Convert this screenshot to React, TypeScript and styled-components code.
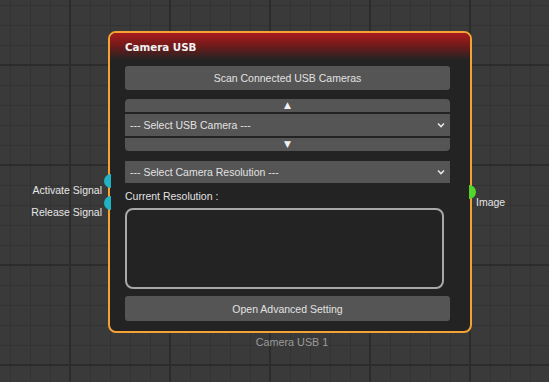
import React from "react";
import styled, { createGlobalStyle } from "styled-components";

const Global = createGlobalStyle`
  html, body { margin: 0; padding: 0; background: #3a3a3a; }
  * { box-sizing: border-box; }
`;

const Canvas = styled.div`
  position: relative;
  width: 549px;
  height: 382px;
  overflow: hidden;
  font-family: "Liberation Sans", Arial, sans-serif;
  background-color: #3a3a3a;
  background-image:
    linear-gradient(to right, #2c2c2c 2px, transparent 2px),
    linear-gradient(to bottom, #2c2c2c 2px, transparent 2px),
    linear-gradient(to right, #333333 1px, transparent 1px),
    linear-gradient(to bottom, #333333 1px, transparent 1px);
  background-size: 100px 100px, 100px 100px, 20px 20px, 20px 20px;
  background-position: 69px 0, 0 64px, 10px 0, 0 5px;
`;

const Node = styled.div`
  position: absolute;
  left: 108px;
  top: 31px;
  width: 364px;
  height: 302px;
  border: 2px solid #f5a235;
  border-radius: 8px;
  background: #232323;
  display: flex;
  flex-direction: column;
`;

const Header = styled.div`
  height: 27px;
  border-radius: 6px 6px 0 0;
  background: linear-gradient(to bottom, #a81c1e 0%, #7a1a1a 40%, #232323 100%);
  color: #f2f2f2;
  font-family: "DejaVu Sans", sans-serif;
  font-weight: bold;
  font-size: 10.3px;
  display: flex;
  align-items: center;
  padding-left: 15px;
`;

const Body = styled.div`
  display: flex;
  flex-direction: column;
  padding: 6px 20px 0 15px;
`;

const Button = styled.div<{ $h: number; $mt?: number }>`
  height: ${(p) => p.$h}px;
  margin-top: ${(p) => p.$mt ?? 0}px;
  background: #555555;
  border-radius: 3px;
  color: #e2e2e2;
  font-size: 10.5px;
  display: flex;
  align-items: center;
  justify-content: center;
`;

const ArrowBar = styled.div<{ $dir: "up" | "down"; $mt: number }>`
  height: 13px;
  margin-top: ${(p) => p.$mt}px;
  background: #555555;
  border-radius: ${(p) => (p.$dir === "up" ? "4px 4px 0 0" : "0 0 4px 4px")};
  color: #f0f0f0;
  font-size: 9px;
  line-height: 13px;
  text-align: center;
  font-family: "DejaVu Sans", sans-serif;
`;

const Select = styled.div<{ $mt: number }>`
  height: 22px;
  margin-top: ${(p) => p.$mt}px;
  background: #555555;
  color: #e2e2e2;
  font-size: 10.5px;
  display: flex;
  align-items: center;
  justify-content: space-between;
  padding: 0 5px 0 5px;
`;

const Label = styled.div`
  margin-top: 6px;
  height: 14px;
  color: #e2e2e2;
  font-size: 10.5px;
  line-height: 14px;
`;

const TextArea = styled.div`
  margin-top: 5px;
  height: 81px;
  width: 319px;
  border: 2px solid #a8a8a8;
  border-radius: 8px;
  background: #232323;
`;

const Socket = styled.div<{ $side: "left" | "right"; $top: number; $color: string }>`
  position: absolute;
  top: ${(p) => p.$top}px;
  ${(p) => (p.$side === "left" ? "left: 104px;" : "left: 469px;")}
  width: 7px;
  height: 14px;
  background: ${(p) => p.$color};
  border-radius: ${(p) => (p.$side === "left" ? "7px 0 0 7px" : "0 7px 7px 0")};
`;

const PortLabel = styled.div<{ $top: number; $side: "left" | "right" }>`
  position: absolute;
  top: ${(p) => p.$top}px;
  ${(p) => (p.$side === "left" ? "right: 447px; text-align: right;" : "left: 476px;")}
  color: #e6e6e6;
  font-size: 10.5px;
  line-height: 14px;
  white-space: nowrap;
`;

const Caption = styled.div`
  position: absolute;
  top: 336px;
  left: 110px;
  width: 364px;
  text-align: center;
  color: #9a9a9a;
  font-size: 10.8px;
`;

const Chevron = () => (
  <svg width="8" height="6" viewBox="0 0 8 6">
    <path d="M1 1.5 L4 4.5 L7 1.5" stroke="#e6e6e6" strokeWidth="1.6" fill="none" />
  </svg>
);

export default function App() {
  return (
    <Canvas>
      <Global />
      <Node>
        <Header>Camera USB</Header>
        <Body>
          <Button $h={24}>Scan Connected USB Cameras</Button>
          <ArrowBar $dir="up" $mt={9}>▲</ArrowBar>
          <Select $mt={2}>
            <span>--- Select USB Camera ---</span>
            <Chevron />
          </Select>
          <ArrowBar $dir="down" $mt={2}>▼</ArrowBar>
          <Select $mt={10}>
            <span>--- Select Camera Resolution ---</span>
            <Chevron />
          </Select>
          <Label>Current Resolution :</Label>
          <TextArea />
          <Button $h={25} $mt={7}>Open Advanced Setting</Button>
        </Body>
      </Node>
      <Socket $side="left" $top={174} $color="#1fb3c4" />
      <Socket $side="left" $top={196} $color="#1fb3c4" />
      <Socket $side="right" $top={185} $color="#52d62a" />
      <PortLabel $side="left" $top={183}>Activate Signal</PortLabel>
      <PortLabel $side="left" $top={205}>Release Signal</PortLabel>
      <PortLabel $side="right" $top={195}>Image</PortLabel>
      <Caption>Camera USB 1</Caption>
    </Canvas>
  );
}
